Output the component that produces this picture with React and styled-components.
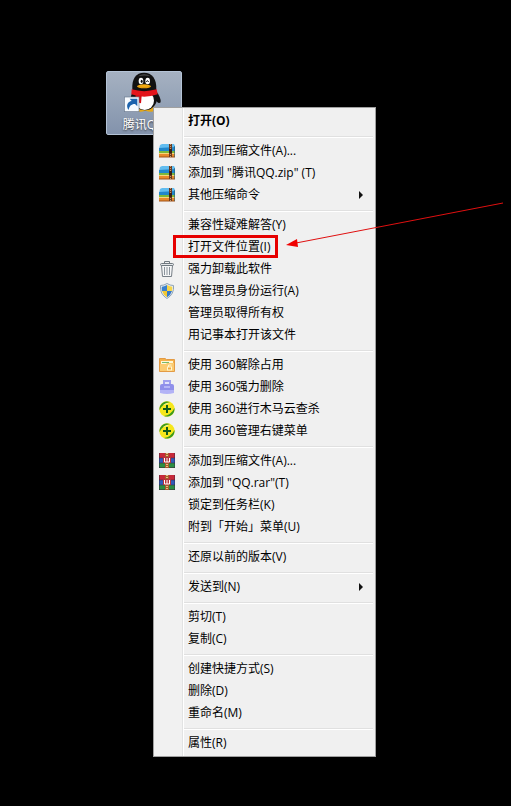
import React from "react";
import styled, { createGlobalStyle } from "styled-components";

const GlobalStyle = createGlobalStyle`
  body {
    margin: 0;
    background-color: #000;
    font-family: "Open Sans", "Noto Sans CJK SC", sans-serif;
    font-size: 12px;
  }
`;

const Desktop = styled.main`
  position: relative;
  min-height: 100vh;
  overflow: hidden;
  background-color: #000;
`;

const Shortcut = styled.button`
  position: absolute;
  left: 106px;
  top: 71px;
  display: flex;
  flex-direction: column;
  align-items: center;
  width: 76px;
  padding: 0;
  border: 1px solid #b4c3d6;
  border-radius: 2px;
  background: linear-gradient(#a5b1c1, #8393ac);
  color: white;
  font-family: inherit;
  font-size: 12px;
  line-height: 18px;
  text-shadow: 0 1px 2px #333;
`;

const Menu = styled.ul`
  position: absolute;
  left: 153px;
  top: 107px;
  box-sizing: border-box;
  width: 223px;
  margin: 0;
  padding: 2px;
  list-style: none;
  border: 1px solid #a0a0a0;
  background: linear-gradient(
    90deg,
    #f1f1f1 28px,
    #e2e3e3 28px,
    #e2e3e3 29px,
    #fff 29px,
    #fff 30px,
    #f0f0f0 30px
  );
`;

const Divider = styled.li`
  height: 1px;
  margin: 4px 0 2px 28px;
  border-bottom: 1px solid #fff;
  background-color: #e0e0e0;
`;

const MenuButton = styled.button`
  position: relative;
  display: flex;
  align-items: center;
  gap: 13px;
  width: 100%;
  height: 22px;
  padding: 0 9px 0 3px;
  border: none;
  background: transparent;
  color: #000;
  font-family: inherit;
  font-size: 12px;
  font-weight: ${({ $bold }) => ($bold ? 700 : 400)};
  line-height: 22px;
  text-align: left;
  white-space: pre;
`;

const IconSlot = styled.span`
  display: flex;
  width: 16px;
  height: 16px;
  flex-shrink: 0;
`;

const ItemLabel = styled.span`
  flex: 1;
`;

const RedFrame = styled.span`
  position: absolute;
  left: 17px;
  top: -1px;
  box-sizing: border-box;
  width: 105px;
  height: 23px;
  border: 3px solid #e60000;
`;

const Pointer = styled.svg`
  position: absolute;
  left: 284px;
  top: 200px;
  pointer-events: none;
`;

const PenguinIcon = () => (
  <svg width="48" height="44" viewBox="66 27 144 132" aria-hidden="true">
    <ellipse cx="126" cy="139" rx="20" ry="7" fill="#e6a817" />
    <ellipse cx="158" cy="138" rx="19" ry="8" fill="#e6a817" />
    <path d="M106 84 Q96 98 99 114 Q106 118 114 102 Z" fill="#111" />
    <path d="M172 82 Q189 102 188 118 Q180 126 170 106 Z" fill="#111" />
    <ellipse cx="141" cy="106" rx="36" ry="36" fill="#111" />
    <ellipse cx="140" cy="113" rx="28" ry="28" fill="#fff" />
    <path
      d="M103 80 C101 46 114 29 138 29 C162 29 176 46 175 80 Q139 98 103 80 Z"
      fill="#111"
    />
    <path d="M120 40 Q138 28 158 40 Q140 35 120 40 Z" fill="#4c4c4c" />
    <ellipse cx="129" cy="54" rx="7" ry="10" fill="#fff" />
    <ellipse cx="149" cy="54" rx="7" ry="10" fill="#fff" />
    <ellipse cx="131" cy="55" rx="3" ry="5" fill="#111" />
    <path d="M145 57 Q148 48 152 57" fill="none" stroke="#111" strokeWidth="3" />
    <ellipse cx="138" cy="70" rx="21" ry="6" fill="#f5ad12" />
    <path d="M120 71 Q139 76 157 71" fill="none" stroke="#b66b00" />
    <path d="M101 79 Q138 90 176 79 L179 94 Q138 108 100 94 Z" fill="#e3141b" />
    <path d="M113 95 L131 98 L129 121 L112 116 Z" fill="#d40d14" />
    <rect x="79" y="102" width="44" height="44" fill="#f7fbff" stroke="#6c7c91" strokeWidth="2" />
    <path
      d="M92 141 C82 128 90 115 101 114 L95 107 L118 107 L118 130 L111 123 C99 123 94 130 92 141 Z"
      fill="#1d63ad"
    />
  </svg>
);

const ZipIcon = () => (
  <svg width="16" height="16" viewBox="0 0 16 16" aria-hidden="true">
    <path d="M1 2 L3 1 H15 L16 3 V6 H0 Z" fill="#62bdf0" />
    <path d="M0 5 L16 4 V8 H0 Z" fill="#2187cc" />
    <path d="M0 8 H16 V10 H0 Z" fill="#7cb83a" />
    <path d="M0 10 H16 V11 H0 Z" fill="#f6d77c" />
    <path d="M0 11 H16 V14 H0 Z" fill="#e88a2a" />
    <path d="M0 14 H16" stroke="#a0521a" />
    <rect x="10" y="1" width="3" height="13" fill="#6b3a20" />
    <path d="M11.500 1 V14" stroke="#c39a70" strokeDasharray="1 1" />
    <rect x="10" y="6" width="3" height="4" fill="#3b2015" />
    <path d="M15.500 3 V14" stroke="#2a5d73" strokeOpacity=".6" />
  </svg>
);

const RarIcon = () => (
  <svg width="16" height="16" viewBox="0 0 16 16" aria-hidden="true">
    <rect y="0" width="16" height="5" fill="#c6293a" />
    <rect y="5" width="16" height="5" fill="#315ab8" />
    <rect y="10" width="16" height="5" fill="#2b8d43" />
    <path d="M0 5H16M0 10H16M0 14.500H16" stroke="#442037" strokeOpacity=".5" />
    <rect x="6" y="0" width="4" height="15" fill="#a65b2a" />
    <path d="M8 0V4M8 11V15" stroke="#e6bf83" strokeWidth="2" strokeDasharray="1 1" />
    <rect x="4" y="4" width="8" height="6" fill="#b8323a" />
    <path d="M5.500 5V9H10.500V5M8 5V9" fill="none" stroke="#fff" />
    <path d="M.5 0V15M15.500 0V15" stroke="#29243c" strokeOpacity=".4" />
  </svg>
);

const TrashIcon = () => (
  <svg width="16" height="16" viewBox="0 0 16 16" aria-hidden="true">
    <path d="M2.500 4.500 L3.500 15.500 H12.500 L13.500 4.500 Z" fill="#f5f6f7" stroke="#777f87" />
    <path d="M5.500 6 V14 M8 6 V14 M10.500 6 V14" stroke="#8b949c" />
    <rect x="1.500" y="2.500" width="13" height="2" rx="1" fill="#e3e6e9" stroke="#707980" />
    <path d="M5.500 2.500 V.5 H10.500 V2.500" fill="none" stroke="#707980" />
  </svg>
);

const ShieldIcon = () => (
  <svg width="16" height="16" viewBox="0 0 16 16" aria-hidden="true">
    <path
      d="M8 .5 Q11 2.500 14.500 2.500 Q15.500 11 8 15.500 Q.5 11 1.500 2.500 Q5 2.500 8 .5 Z"
      fill="#e8eef4"
      stroke="#8fa3b5"
    />
    <path d="M8 2 Q5 3.700 2.800 3.800 Q2.500 6 3 8 H8 Z" fill="#3a80cc" />
    <path d="M8 2 Q11 3.700 13.200 3.800 Q13.500 6 13 8 H8 Z" fill="#f7d548" />
    <path d="M3 8 Q4.200 12 8 14.200 V8 Z" fill="#f3c832" />
    <path d="M13 8 Q11.800 12 8 14.200 V8 Z" fill="#3578c6" />
  </svg>
);

const FolderIcon = () => (
  <svg width="16" height="16" viewBox="0 0 16 16" aria-hidden="true">
    <path d="M.5 1.500 H6 L7.500 2.500 H15.500 V14.500 H.5 Z" fill="#f4b04b" stroke="#e39b45" />
    <rect x="2" y="4" width="12" height="4" fill="#fdf8d8" />
    <path d="M3 5.500 H10" stroke="#78b96b" />
    <path d="M1 7 H7 L8 6 H15 V14 H1 Z" fill="#fbcb70" />
    <rect x="8.500" y="10" width="4" height="3" fill="#f2ab40" stroke="#fff6d0" />
    <path d="M9.500 10 V8 H12.500" fill="none" stroke="#fff6d0" />
  </svg>
);

const EraserIcon = () => (
  <svg width="16" height="16" viewBox="0 0 16 16" aria-hidden="true">
    <path d="M4 1 H12 V7 H4 Z" fill="#9f9fee" />
    <path d="M6 3 H10 V6 H6 Z" fill="#e2e2fc" />
    <rect x="1" y="5" width="14" height="8" rx="2" fill="#8f8fea" />
    <path d="M5 7 H11 V9 H5 Z" fill="#b5b5f6" />
    <path d="M1 11 H15 V14 Q8 16 1 14 Z" fill="#b3b3f6" />
  </svg>
);

const SafeIcon = () => (
  <svg width="16" height="16" viewBox="0 0 16 16" aria-hidden="true">
    <circle cx="8" cy="8" r="7.700" fill="#f6e71c" />
    <path d="M.5 9 A7.700 7.700 0 0 1 11 1 Q4 2 .5 9 Z" fill="#3a9a1e" />
    <path d="M15.500 7 A7.700 7.700 0 0 1 5 15 Q12 14 15.500 7 Z" fill="#3a9a1e" />
    <path d="M4 4 Q7 1.500 10 2.500 Q7 3 4 4 Z" fill="#fffbd0" />
    <path d="M8 4 V12 M4 8 H12" stroke="#115b1b" strokeWidth="2" />
  </svg>
);

const SubmenuArrow = () => (
  <svg width="5" height="8" viewBox="0 0 5 8" aria-hidden="true">
    <path d="M0 0 L4 4 L0 8 Z" fill="#111" />
  </svg>
);

const groups = [
  [{ label: "打开(O)", bold: true }],
  [
    { label: "添加到压缩文件(A)...", icon: ZipIcon },
    { label: '添加到 "腾讯QQ.zip" (T)', icon: ZipIcon },
    { label: "其他压缩命令", icon: ZipIcon, submenu: true },
  ],
  [
    { label: "兼容性疑难解答(Y)" },
    { label: "打开文件位置(I)", framed: true },
    { label: "强力卸载此软件", icon: TrashIcon },
    { label: "以管理员身份运行(A)", icon: ShieldIcon },
    { label: "管理员取得所有权" },
    { label: "用记事本打开该文件" },
  ],
  [
    { label: "使用 360解除占用", icon: FolderIcon },
    { label: "使用 360强力删除", icon: EraserIcon },
    { label: "使用 360进行木马云查杀", icon: SafeIcon },
    { label: "使用 360管理右键菜单", icon: SafeIcon },
  ],
  [
    { label: "添加到压缩文件(A)...", icon: RarIcon },
    { label: '添加到 "QQ.rar"(T)', icon: RarIcon },
    { label: "锁定到任务栏(K)" },
    { label: "附到「开始」菜单(U)" },
  ],
  [{ label: "还原以前的版本(V)" }],
  [{ label: "发送到(N)", submenu: true }],
  [{ label: "剪切(T)" }, { label: "复制(C)" }],
  [{ label: "创建快捷方式(S)" }, { label: "删除(D)" }, { label: "重命名(M)" }],
  [{ label: "属性(R)" }],
];

const MenuItem = ({ label, icon: Icon, bold, submenu, framed }) => (
  <li role="none">
    <MenuButton type="button" role="menuitem" $bold={bold} aria-haspopup={submenu ? "menu" : undefined}>
      <IconSlot>{Icon && <Icon />}</IconSlot>
      <ItemLabel>{label}</ItemLabel>
      {submenu && <SubmenuArrow />}
      {framed && <RedFrame />}
    </MenuButton>
  </li>
);

const App = () => {
  return (
    <Desktop>
      <GlobalStyle />
      <Shortcut type="button">
        <PenguinIcon />
        腾讯QQ
      </Shortcut>
      <Menu role="menu" aria-label="腾讯QQ">
        {groups.map((items, index) => (
          <React.Fragment key={index}>
            {index > 0 && <Divider role="separator" />}
            {items.map((item) => (
              <MenuItem key={item.label} {...item} />
            ))}
          </React.Fragment>
        ))}
      </Menu>
      <Pointer width="222" height="52" viewBox="0 0 222 52" aria-hidden="true">
        <path d="M12 43 L219 3" stroke="#e01010" />
        <path d="M2 45 L13 39 L14 47 Z" fill="#f00000" />
      </Pointer>
    </Desktop>
  );
};

export default App;
